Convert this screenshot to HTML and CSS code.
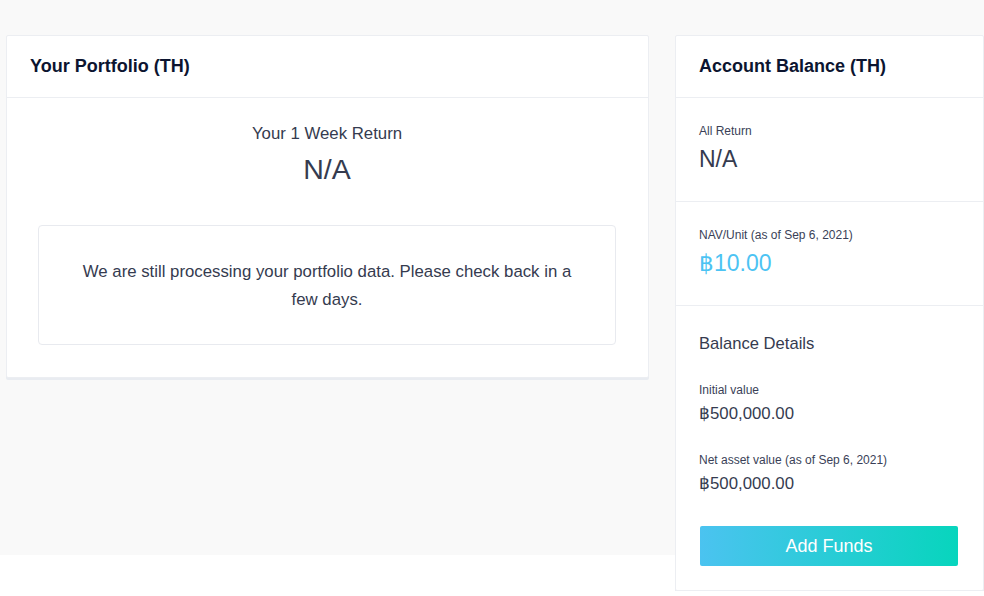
FILE: index.html
```html
<!DOCTYPE html>
<html>
<head>
<meta charset="utf-8">
<link rel="stylesheet" href="styles.css">
</head>
<body>
<div class="page">
  <section class="card portfolio">
    <header class="card-head"><h2>Your Portfolio (TH)</h2></header>
    <div class="portfolio-body">
      <div class="week-label">Your 1 Week Return</div>
      <div class="week-value">N/A</div>
      <div class="notice">We are still processing your portfolio data. Please check back in a few days.</div>
    </div>
  </section>
  <section class="card balance">
    <header class="card-head"><h2>Account Balance (TH)</h2></header>
    <div class="bal-section">
      <div class="small-label">All Return</div>
      <div class="big-value">N/A</div>
    </div>
    <div class="bal-section">
      <div class="small-label">NAV/Unit (as of Sep 6, 2021)</div>
      <div class="big-value blue">฿10.00</div>
    </div>
    <div class="bal-details">
      <div class="details-title">Balance Details</div>
      <div class="detail">
        <div class="small-label">Initial value</div>
        <div class="detail-value">฿500,000.00</div>
      </div>
      <div class="detail">
        <div class="small-label">Net asset value (as of Sep 6, 2021)</div>
        <div class="detail-value">฿500,000.00</div>
      </div>
      <button class="add-funds">Add Funds</button>
    </div>
  </section>
</div>
</body>
</html>
```

FILE: styles.css
```css
* { box-sizing: border-box; }
html {
  margin: 0;
  padding: 0;
  min-height: 100%;
  background: #ffffff linear-gradient(to bottom, #f9f9f9 0, #f9f9f9 555px, #ffffff 555px, #ffffff 100%) no-repeat;
}
body {
  margin: 0;
  padding: 0;
  font-family: "Liberation Sans", Arial, sans-serif;
  color: #353b4f;
}
.page {
  padding: 35px 0 0 6px;
  display: flex;
  align-items: flex-start;
  gap: 26px;
}
.card {
  background: #ffffff;
  border: 1px solid #eceef2;
  box-shadow: 0 2px 0 #e9ecf1;
  border-radius: 2px;
}
.portfolio { width: 644px; }
.balance { width: 309px; flex-shrink: 0; }
.card-head {
  height: 62px;
  border-bottom: 1px solid #eceef2;
  display: flex;
  align-items: center;
  padding: 0 23px;
}
.card-head h2 {
  margin: 0;
  font-size: 18px;
  font-weight: 700;
  color: #0c1530;
}
.portfolio-body {
  padding: 24px 32px 32px 31px;
  text-align: center;
}
.week-label { font-size: 16.8px; line-height: 24px; color: #353b4f; }
.week-value { font-size: 28.5px; line-height: 36px; margin-top: 5px; color: #353b4f; }
.notice {
  margin-top: 38px;
  border: 1px solid #e8eaef;
  border-radius: 4px;
  padding: 32px 40px 30px;
  font-size: 16.8px;
  line-height: 28px;
  color: #353b4f;
}
.bal-section {
  padding: 25px 23px 27px;
  border-bottom: 1px solid #eceef2;
}
.small-label { font-size: 12px; line-height: 16px; color: #3a3f57; }
.big-value { font-size: 23px; line-height: 30px; margin-top: 5px; color: #353b4f; }
.big-value.blue { color: #4cc3f3; }
.bal-details { padding: 26px 23px 24px; }
.details-title { font-size: 16.6px; line-height: 24px; color: #353b4f; }
.detail { margin-top: 26px; }
.detail-value { font-size: 16.8px; line-height: 24px; margin-top: 4px; color: #353b4f; }
.add-funds {
  display: block;
  width: 258px;
  height: 40px;
  margin: 30px 0 0 1px;
  border: none;
  border-radius: 2px;
  background: linear-gradient(90deg, #4bc3f0 0%, #07d5bd 100%);
  color: #ffffff;
  font-family: "Liberation Sans", Arial, sans-serif;
  font-size: 18px;
  cursor: pointer;
}
```
